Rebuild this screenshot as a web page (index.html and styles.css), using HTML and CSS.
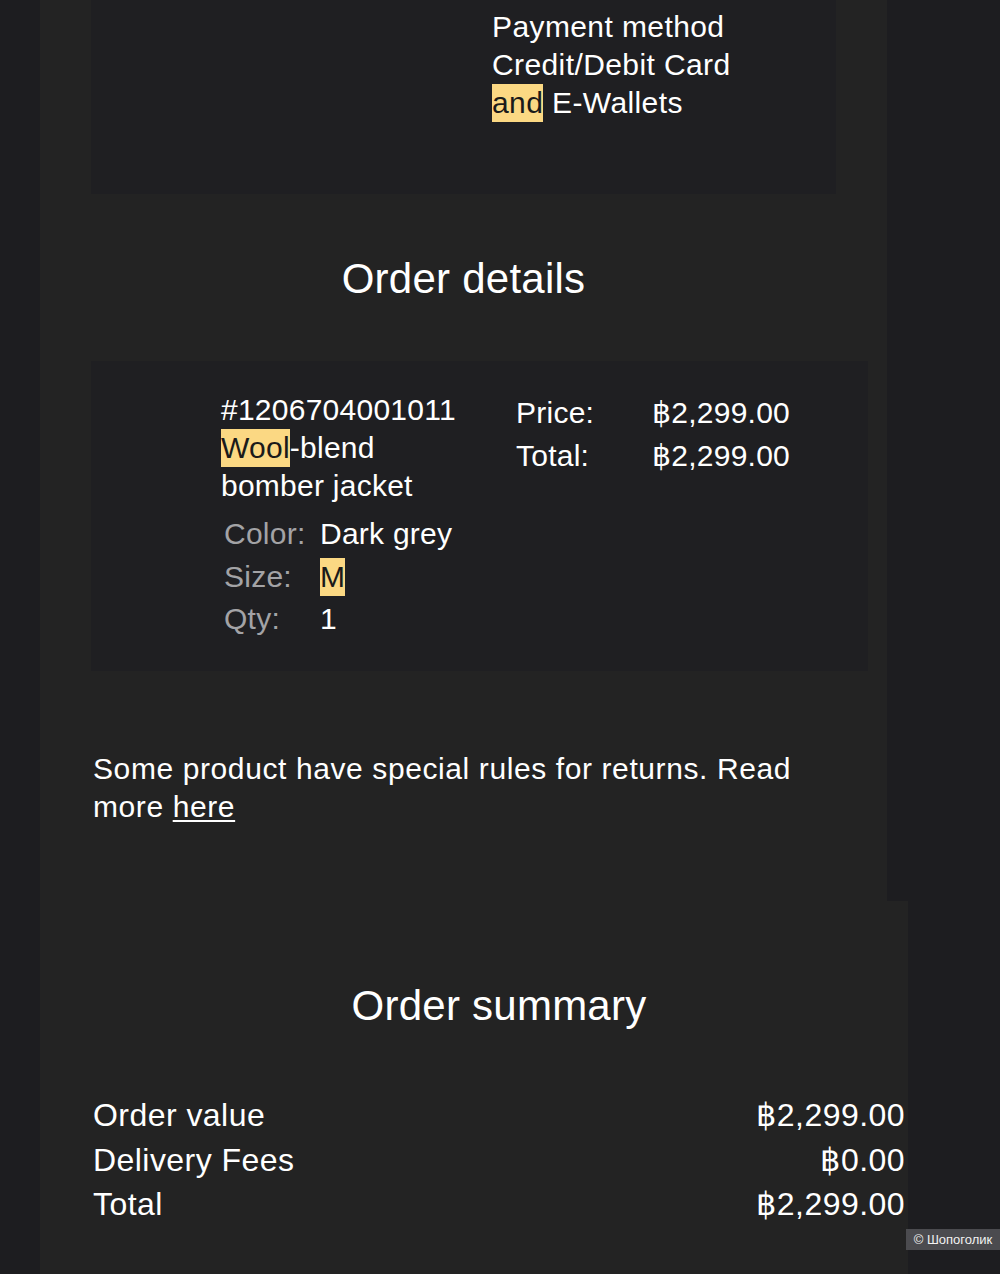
FILE: index.html
```html
<!DOCTYPE html>
<html lang="en">
<head>
<meta charset="utf-8">
<title>Order confirmation</title>
<link rel="stylesheet" href="styles.css">
</head>
<body>
<div class="page">
  <div class="upper">
    <section class="card card-top">
      <div class="payment">
        <div>Payment method</div>
        <div>Credit/Debit Card</div>
        <div><mark class="hl">and</mark> E-Wallets</div>
      </div>
    </section>

    <h2 class="title title-details">Order details</h2>

    <section class="card card-details">
      <div class="item">
        <div class="item-name">
          <div>#1206704001011</div>
          <div><mark class="hl">Wool</mark>-blend</div>
          <div>bomber jacket</div>
        </div>
        <div class="attrs">
          <span class="attr-label">Color:</span><span class="attr-value">Dark grey</span>
          <span class="attr-label">Size:</span><span class="attr-value"><mark class="hl">M</mark></span>
          <span class="attr-label">Qty:</span><span class="attr-value">1</span>
        </div>
      </div>
      <div class="prices">
        <span>Price:</span><span>฿2,299.00</span>
        <span>Total:</span><span>฿2,299.00</span>
      </div>
    </section>

    <p class="returns">Some product have special rules for returns. Read more <a href="#" class="link">here</a></p>
  </div>

  <section class="summary">
    <h2 class="title title-summary">Order summary</h2>
    <div class="sum-rows">
      <div class="sum-row"><span>Order value</span><span>฿2,299.00</span></div>
      <div class="sum-row"><span>Delivery Fees</span><span>฿0.00</span></div>
      <div class="sum-row"><span>Total</span><span>฿2,299.00</span></div>
    </div>
  </section>
</div>
<div class="watermark">© Шопоголик</div>
</body>
</html>
```
FILE: styles.css
```css
html, body {
  margin: 0;
  padding: 0;
}
body {
  background: #1d1d20;
  color: #ffffff;
  font-family: "Liberation Sans", Arial, sans-serif;
  width: 1000px;
  height: 1274px;
  overflow: hidden;
  position: relative;
}
.page {
  margin-left: 40px;
  width: 868px;
}
.upper {
  width: 847px;
  background: #232323;
  height: 901px;
  overflow: hidden;
}
.card {
  background: #1f1f22;
}
.card-top {
  margin-left: 51px;
  width: 745px;
  height: 194px;
  box-sizing: border-box;
  padding: 8px 0 0 401px;
  font-size: 30px;
  line-height: 38px;
  letter-spacing: 0.4px;
}
.hl {
  background: #fbd883;
  color: #1a1a1a;
  display: inline-block;
  line-height: 38px;
  height: 38px;
  vertical-align: top;
}
.title {
  margin: 0;
  font-weight: normal;
  text-align: center;
  font-size: 42px;
  letter-spacing: 0.25px;
}
.title-details {
  height: 167px;
  line-height: 170px;
}
.card-details {
  margin-left: 51px;
  width: 777px;
  height: 310px;
  box-sizing: border-box;
  padding: 30px 0 0 130px;
  display: flex;
  font-size: 30px;
  letter-spacing: 0.25px;
}
.item {
  width: 295px;
}
.item-name {
  line-height: 38px;
}
.attrs {
  margin-top: 8px;
  display: grid;
  grid-template-columns: 99px auto;
  line-height: 42.5px;
}
.attr-label {
  color: #a3a3a6;
  padding-left: 3px;
}
.attrs .hl {
  height: 38px;
  line-height: 38px;
  margin-top: 2px;
}
.prices {
  display: grid;
  grid-template-columns: 136px auto;
  grid-auto-rows: 43px;
  line-height: 43px;
  align-content: start;
}
.returns {
  margin: 79px 0 0 53px;
  width: 740px;
  font-size: 30px;
  line-height: 38px;
  letter-spacing: 0.6px;
}
.link {
  color: #ffffff;
  text-decoration: underline;
  text-underline-offset: 3px;
  text-decoration-thickness: 2px;
}
.summary {
  background: #232323;
  width: 868px;
  height: 373px;
  box-sizing: border-box;
  padding-top: 80px;
}
.title-summary {
  padding-left: 50px;
  line-height: 50px;
}
.sum-rows {
  margin-top: 62px;
  padding: 0 3px 0 53px;
  font-size: 32px;
  line-height: 44.5px;
  letter-spacing: 0.45px;
}
.sum-row {
  display: flex;
  justify-content: space-between;
}
.watermark {
  position: absolute;
  left: 906px;
  top: 1229px;
  width: 94px;
  height: 21px;
  background: #4b4b4f;
  color: #f2f2f2;
  font-size: 13px;
  line-height: 21px;
  text-align: center;
  white-space: nowrap;
  font-family: "Liberation Sans", Arial, sans-serif;
}
```
